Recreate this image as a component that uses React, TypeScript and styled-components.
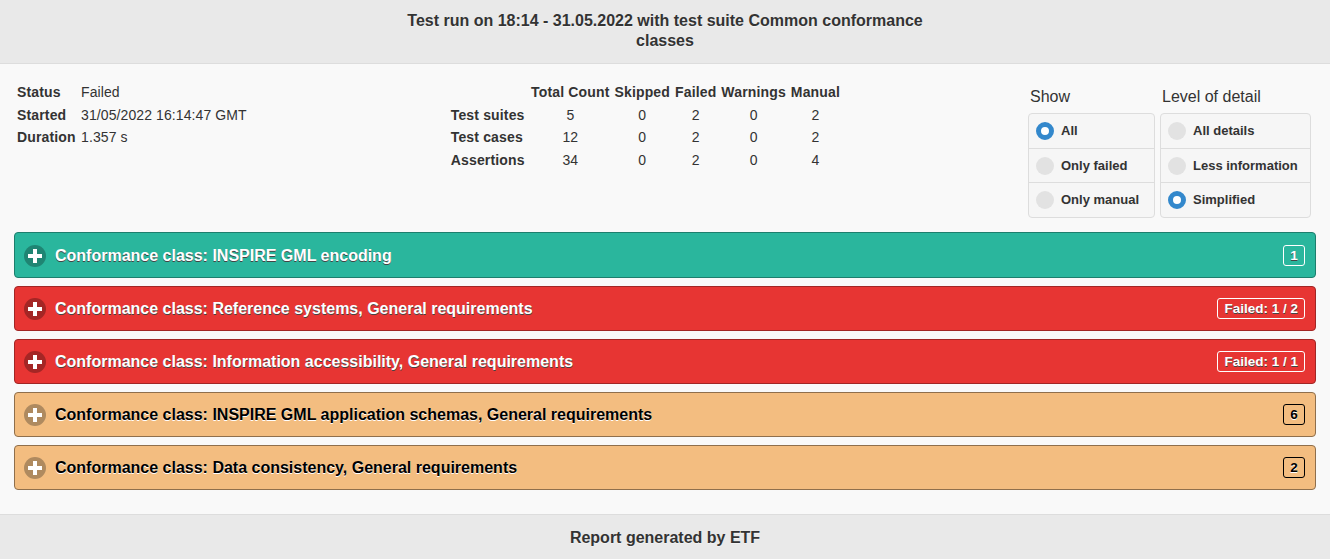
import React from "react";
import styled, { createGlobalStyle } from "styled-components";

const GlobalStyle = createGlobalStyle`
  html, body { margin: 0; padding: 0; }
  body {
    font-family: "Liberation Sans", Arial, sans-serif;
    color: #333;
    background: #f9f9f9;
  }
`;

const classes = [
  { title: "INSPIRE GML encoding", tone: "passed", badge: "1" },
  { title: "Reference systems, General requirements", tone: "failed", badge: "Failed: 1 / 2" },
  { title: "Information accessibility, General requirements", tone: "failed", badge: "Failed: 1 / 1" },
  { title: "INSPIRE GML application schemas, General requirements", tone: "manual", badge: "6" },
  { title: "Data consistency, General requirements", tone: "manual", badge: "2" },
] as const;

type Tone = "passed" | "failed" | "manual";

const tones = {
  passed: { bg: "#2ab69d", border: "#1d7e6d", icon: "#1f8573", text: "#fff", shadow: "0 1px 0 #444" },
  failed: { bg: "#e73533", border: "#a12625", icon: "#a42625", text: "#fff", shadow: "0 1px 0 #444" },
  manual: { bg: "#f3bd80", border: "#8f6f4c", icon: "#af8a5f", text: "#000", shadow: "0 1px 0 #fff" },
};

const counts = [
  { name: "Test suites", values: [5, 0, 2, 0, 2] },
  { name: "Test cases", values: [12, 0, 2, 0, 2] },
  { name: "Assertions", values: [34, 0, 2, 0, 4] },
];

const Page = styled.div`
  height: 559px;
  display: flex;
  flex-direction: column;
  overflow: hidden;
`;

const Bar = styled.div`
  background: #e9e9e9;
  font-weight: bold;
  font-size: 16px;
  line-height: 20px;
  text-align: center;
  text-shadow: 0 1px 0 #f3f3f3;
  box-sizing: border-box;
`;

const Header = styled(Bar)`
  height: 64px;
  padding: 11px 0 0;
  border-bottom: 1px solid #ddd;
`;

const Title = styled.div`
  width: 540px;
  margin: 0 auto;
`;

const Footer = styled(Bar)`
  height: 45px;
  margin-top: 24px;
  padding-top: 13px;
  border-top: 1px solid #ddd;
`;

const Content = styled.div`
  flex: 1;
  padding: 0 14px;
`;

const Summary = styled.div`
  height: 168px;
  display: flex;
  align-items: flex-start;
`;

const MetaTable = styled.table`
  border-collapse: collapse;
  margin: 17px 0 0 3px;
  font-size: 14px;
  th { text-align: left; padding: 0; width: 64px; font-weight: bold; height: 22.5px; letter-spacing: 0.15px; }
  td { padding: 0; height: 22.5px; letter-spacing: 0.1px; white-space: nowrap; }
`;

const CountTable = styled.table`
  border-collapse: collapse;
  margin: 17px 0 0 204px;
  font-size: 14px;
  th { font-weight: bold; height: 22.5px; padding: 0 2.5px; white-space: nowrap; letter-spacing: 0.15px; }
  td { text-align: center; height: 22.5px; padding: 0; }
`;

const RowHead = styled.th`
  padding: 0 4px 0 0 !important;
  text-align: left;
`;

const Filters = styled.div`
  margin-left: auto;
  margin-right: 5px;
  display: flex;
  gap: 5px;
  padding-top: 24px;
`;

const FilterGroup = styled.div<{ $w: number }>`
  width: ${(p) => p.$w}px;
`;

const Legend = styled.div`
  font-size: 16px;
  line-height: 18px;
  margin: 0 0 7px 2px;
`;

const Options = styled.div`
  border: 1px solid #ddd;
  border-radius: 4px;
  background: #f6f6f6;
`;

const Option = styled.div`
  display: flex;
  align-items: center;
  gap: 7px;
  height: 34px;
  padding-left: 7px;
  font-size: 13px;
  font-weight: bold;
  text-shadow: 0 1px 0 #f3f3f3;
  white-space: nowrap;
  & + & { border-top: 1px solid #ddd; }
  &:nth-child(2) { height: 32px; padding-top: 1px; }
`;

const OptionText = styled.span`
  padding-bottom: 2px;
`;

const Radio = styled.span<{ $on?: boolean }>`
  width: 18px;
  height: 18px;
  box-sizing: border-box;
  border-radius: 50%;
  flex: none;
  background: ${(p) => (p.$on ? "#fff" : "#e2e2e2")};
  border: ${(p) => (p.$on ? "5.5px solid #3388cc" : "none")};
`;

const List = styled.div`
  display: flex;
  flex-direction: column;
  gap: 8px;
`;

const ClassRow = styled.div<{ $tone: Tone }>`
  height: 45px;
  box-sizing: border-box;
  display: flex;
  align-items: center;
  padding: 0 10px 0 9px;
  border: 1px solid ${(p) => tones[p.$tone].border};
  border-radius: 4px;
  background: ${(p) => tones[p.$tone].bg};
  color: ${(p) => tones[p.$tone].text};
  text-shadow: ${(p) => tones[p.$tone].shadow};
  font-size: 16px;
  font-weight: bold;
  &:first-child { height: 46px; padding-top: 1px; }
`;

const PlusIcon = styled.svg`
  flex: none;
  margin-right: 9px;
`;

const Badge = styled.span<{ $tone: Tone }>`
  margin-left: auto;
  height: 21px;
  min-width: 22px;
  padding: 0 6px;
  box-sizing: border-box;
  border: 1px solid ${(p) => (p.$tone === "manual" ? "#000" : "#fff")};
  border-radius: 3px;
  font-size: 13.5px;
  line-height: 19px;
  text-align: center;
`;

function Plus({ tone }: { tone: Tone }) {
  return (
    <PlusIcon width="22" height="22" viewBox="0 0 22 22">
      <circle cx="11" cy="11" r="11" fill={tones[tone].icon} />
      <path d="M9 4h4v5h5v4h-5v5H9v-5H4V9h5z" fill="#fff" />
    </PlusIcon>
  );
}

function Group({ label, width, items, active }: { label: string; width: number; items: string[]; active: string }) {
  return (
    <FilterGroup $w={width}>
      <Legend>{label}</Legend>
      <Options>
        {items.map((item) => (
          <Option key={item}>
            <Radio $on={item === active} />
            <OptionText>{item}</OptionText>
          </Option>
        ))}
      </Options>
    </FilterGroup>
  );
}

export default function App() {
  return (
    <Page>
      <GlobalStyle />
      <Header>
        <Title>Test run on 18:14 - 31.05.2022 with test suite Common conformance classes</Title>
      </Header>
      <Content>
        <Summary>
          <MetaTable>
            <tbody>
              <tr><th>Status</th><td>Failed</td></tr>
              <tr><th>Started</th><td>31/05/2022 16:14:47 GMT</td></tr>
              <tr><th>Duration</th><td>1.357 s</td></tr>
            </tbody>
          </MetaTable>
          <CountTable>
            <thead>
              <tr>
                <th />
                <th>Total Count</th>
                <th>Skipped</th>
                <th>Failed</th>
                <th>Warnings</th>
                <th>Manual</th>
              </tr>
            </thead>
            <tbody>
              {counts.map((row) => (
                <tr key={row.name}>
                  <RowHead>{row.name}</RowHead>
                  {row.values.map((v, i) => (
                    <td key={i}>{v}</td>
                  ))}
                </tr>
              ))}
            </tbody>
          </CountTable>
          <Filters>
            <Group label="Show" width={127} items={["All", "Only failed", "Only manual"]} active="All" />
            <Group label="Level of detail" width={151} items={["All details", "Less information", "Simplified"]} active="Simplified" />
          </Filters>
        </Summary>
        <List>
          {classes.map((c) => (
            <ClassRow key={c.title} $tone={c.tone}>
              <Plus tone={c.tone} />
              Conformance class: {c.title}
              <Badge $tone={c.tone}>{c.badge}</Badge>
            </ClassRow>
          ))}
        </List>
      </Content>
      <Footer>Report generated by ETF</Footer>
    </Page>
  );
}
